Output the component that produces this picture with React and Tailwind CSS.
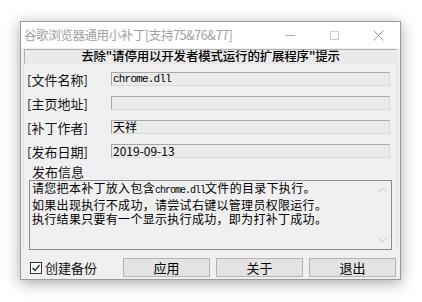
const FONT = { fontFamily: '"Noto Sans CJK SC", "Liberation Sans", sans-serif' };

const rows = [
  { label: "文件名称", value: "chrome.dll", mono: true },
  { label: "主页地址", value: "" },
  { label: "补丁作者", value: "天祥" },
  { label: "发布日期", value: "2019-09-13" },
];

function Field({ label, value, mono }) {
  return (
    <div className="flex items-center h-[24px]">
      <span className="w-[84px] pl-[3px] text-[13px] leading-[15px] text-[#111] whitespace-nowrap">
        [{label}]
      </span>
      <div className="ml-[3px] w-[279px] h-[14px] flex items-center bg-[#ebebeb] border border-t-[#a8a8a8] border-l-[#a8a8a8] border-b-[#dadada] border-r-[#dadada] px-[1px]">
        <span
          className={
            mono
              ? "font-['Liberation_Mono'] text-[11px] tracking-[-0.8px] text-black leading-[12px]"
              : "text-[12px] text-black leading-[12px]"
          }
        >
          {value}
        </span>
      </div>
    </div>
  );
}

function Button({ children }) {
  return (
    <button className="w-[87px] h-[19px] bg-[#e3e3e3] border border-[#b4b4b4] text-[13px] leading-none text-black flex items-center justify-center">
      {children}
    </button>
  );
}

export default function App() {
  return (
    <div className="w-[422px] h-[302px] bg-white overflow-hidden pt-[21px] pl-[20px]" style={FONT}>
      <div className="w-[381px] h-[259px] flex flex-col bg-[#f0f0f0] border border-[#9a9a9a] shadow-[0_3px_14px_rgba(0,0,0,0.35)]">
        {/* title bar */}
        <div className="h-[26px] bg-white flex items-center pl-[3px]">
          <span className="text-[12.5px] text-[#a0a0a0] leading-none whitespace-nowrap tracking-[-0.4px]">
            谷歌浏览器通用小补丁[支持75&76&77]
          </span>
          <div className="ml-auto flex items-center h-full">
            <div className="w-[44px] flex justify-center">
              <div className="w-[10px] h-px bg-[#a8a8a8]" />
            </div>
            <div className="w-[44px] flex justify-center">
              <div className="w-[9px] h-[9px] border border-[#cfcfcf]" />
            </div>
            <div className="w-[44px] flex justify-center">
              <svg width="11" height="11" viewBox="0 0 11 11">
                <path d="M0.5 0.5 L10.5 10.5 M10.5 0.5 L0.5 10.5" stroke="#9c9c9c" strokeWidth="1" />
              </svg>
            </div>
          </div>
        </div>

        {/* body */}
        <div className="flex-1 flex flex-col px-[3px] pt-[1px]">
          <div className="h-[15px] bg-[#ebebeb] border border-t-[#b0b0b0] border-l-[#b0b0b0] border-b-[#e6e6e6] border-r-[#e6e6e6] flex items-center justify-center">
            <span className="text-[12.5px] font-medium leading-none text-black whitespace-nowrap tracking-[-0.2px]">
              去除"请停用以开发者模式运行的扩展程序"提示
            </span>
          </div>

          <div className="flex flex-col border-x border-[#e2e2e2] mx-[-1px] pt-[3px]">
            {rows.map((r) => (
              <Field key={r.label} {...r} />
            ))}

            <div className="pl-[8px] text-[13px] leading-[17px] text-[#111]">发布信息</div>
            <div className="ml-[5px] w-[363px] h-[70px] bg-[#f0f0f0] border border-[#8c8c8c] flex">
              <div className="flex-1 pl-[2px] text-[12px] leading-[14px] text-black tracking-[0.3px] whitespace-nowrap">
                <div>
                  请您把本补丁放入包含
                  <span className="font-['Liberation_Mono'] text-[10px] tracking-[-1px]">chrome.dll</span>
                  文件的目录下执行。
                </div>
                <div>如果出现执行不成功，请尝试右键以管理员权限运行。</div>
                <div>执行结果只要有一个显示执行成功，即为打补丁成功。</div>
              </div>
              <div className="w-[17px] flex flex-col items-center justify-between py-[6px]">
                <svg width="9" height="6" viewBox="0 0 9 6">
                  <path d="M0.5 5 L4.5 1 L8.5 5" stroke="#c4c4c4" fill="none" />
                </svg>
                <svg width="9" height="6" viewBox="0 0 9 6">
                  <path d="M0.5 1 L4.5 5 L8.5 1" stroke="#c4c4c4" fill="none" />
                </svg>
              </div>
            </div>
          </div>

          <div className="mt-[8px] flex items-center">
            <div className="ml-[6px] w-[12px] h-[12px] border border-[#333] bg-white flex items-center justify-center">
              <svg width="10" height="10" viewBox="0 0 10 10">
                <path d="M1.5 5 L4 7.5 L8.5 2" stroke="#222" strokeWidth="1.2" fill="none" />
              </svg>
            </div>
            <span className="ml-[3px] text-[13px] leading-none text-[#111]">创建备份</span>
            <div className="ml-auto mr-[1px] flex gap-[6px]">
              <Button>应用</Button>
              <Button>关于</Button>
              <Button>退出</Button>
            </div>
          </div>
        </div>
      </div>
    </div>
  );
}
